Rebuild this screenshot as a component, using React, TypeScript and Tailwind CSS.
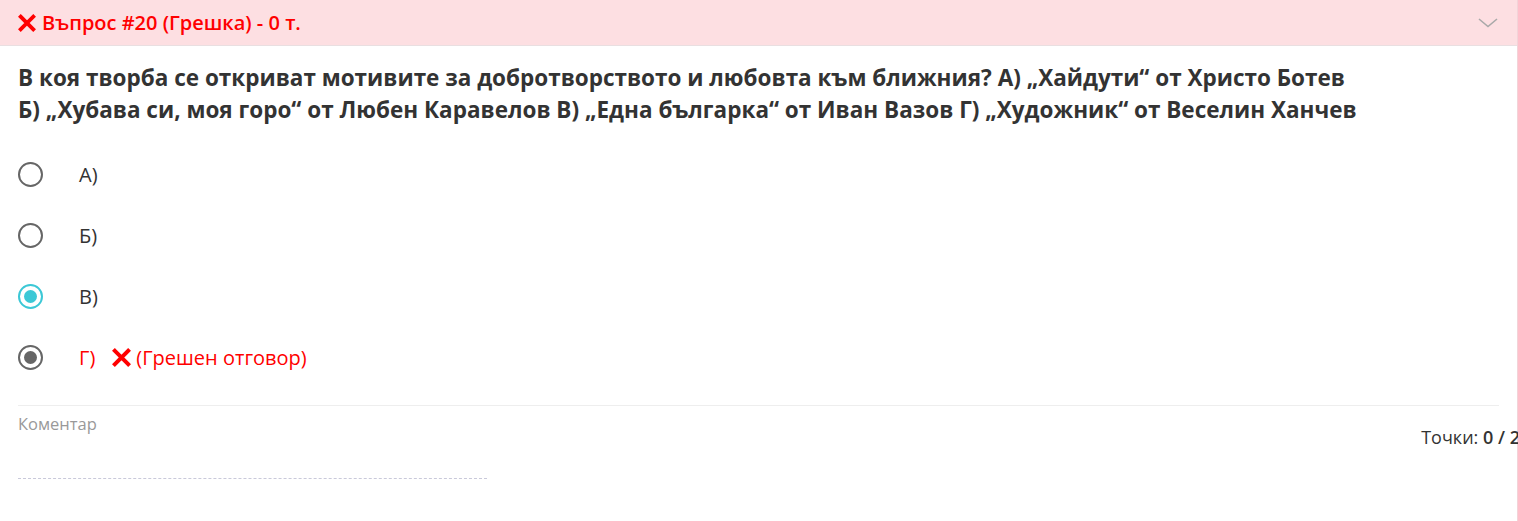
import React from 'react';

const options = [
  { key: 'a', label: 'А)', state: 'none' },
  { key: 'b', label: 'Б)', state: 'none' },
  { key: 'c', label: 'В)', state: 'correct' },
  { key: 'd', label: 'Г)', state: 'wrong' },
];

const Cross: React.FC<{ size: number }> = ({ size }) => (
  <svg width={size} height={size} viewBox="0 0 20 20">
    <path d="M3 3 L17 17 M17 3 L3 17" stroke="#ff0000" strokeWidth="4.2" strokeLinecap="square" />
  </svg>
);

const Radio: React.FC<{ state: string }> = ({ state }) => {
  if (state === 'correct') {
    return (
      <span className="w-[25px] h-[25px] rounded-full border-2 border-[#3cc8d6] flex items-center justify-center">
        <span className="w-[13px] h-[13px] rounded-full bg-[#3cc8d6]" />
      </span>
    );
  }
  if (state === 'wrong') {
    return (
      <span className="w-[25px] h-[25px] rounded-full border-2 border-[#666] flex items-center justify-center">
        <span className="w-[13px] h-[13px] rounded-full bg-[#666]" />
      </span>
    );
  }
  return <span className="w-[25px] h-[25px] rounded-full border-2 border-[#666]" />;
};

export default function App() {
  return (
    <div className="w-[1518px] h-[521px] bg-white overflow-hidden font-['Open_Sans',sans-serif] text-[#333]">
      <div className="h-full border-r border-[#f3d3d8]">
        <div className="h-[46px] bg-[#fddfe2] border-b border-[#e9dfe1] flex items-center justify-between pl-[18px] pr-[18px]">
          <div className="flex items-center gap-[6px] text-[#ff0000] text-[20px] font-semibold">
            <Cross size={18} />
            <span>Въпрос #20 (Грешка) - 0 т.</span>
          </div>
          <svg width="20" height="10" viewBox="0 0 20 10" className="mr-[1px]">
            <path d="M1 1 L10 8.5 L19 1" fill="none" stroke="#a9a9a9" strokeWidth="1.6" />
          </svg>
        </div>

        <div className="px-[18px]">
          <p className="mt-[16px] text-[22.5px] leading-[32px] font-bold text-[#333]">
            В коя творба се откриват мотивите за добротворството и любовта към ближния? А) „Хайдути“ от Христо Ботев
            <br />
            Б) „Хубава си, моя горо“ от Любен Каравелов В) „Една българка“ от Иван Вазов Г) „Художник“ от Веселин Ханчев
          </p>

          <div className="mt-[18px] flex flex-col">
            {options.map((o) => (
              <div key={o.key} className="h-[61px] flex items-center">
                <Radio state={o.state} />
                <span className={`ml-[36px] text-[20px] ${o.state === 'wrong' ? 'text-[#ff0000]' : 'text-[#333]'}`}>{o.label}</span>
                {o.state === 'wrong' && (
                  <span className="ml-[17px] flex items-center gap-[5px] text-[20px] text-[#ff0000]">
                    <Cross size={19} />
                    (Грешен отговор)
                  </span>
                )}
              </div>
            ))}
          </div>

          <div className="mt-[17px] border-t border-[#eeeeee] flex justify-between">
            <div className="w-[469px]">
              <div className="mt-[6px] text-[16.5px] text-[#999]">Коментар</div>
              <div className="mt-[41px] border-b border-dashed border-[#c9c9da]" />
            </div>
            <div className="mt-[18px] -mr-[21px] text-[18px] text-[#333] whitespace-nowrap">
              Точки: <span className="font-semibold">0 / 2</span>
            </div>
          </div>
        </div>
      </div>
    </div>
  );
}
